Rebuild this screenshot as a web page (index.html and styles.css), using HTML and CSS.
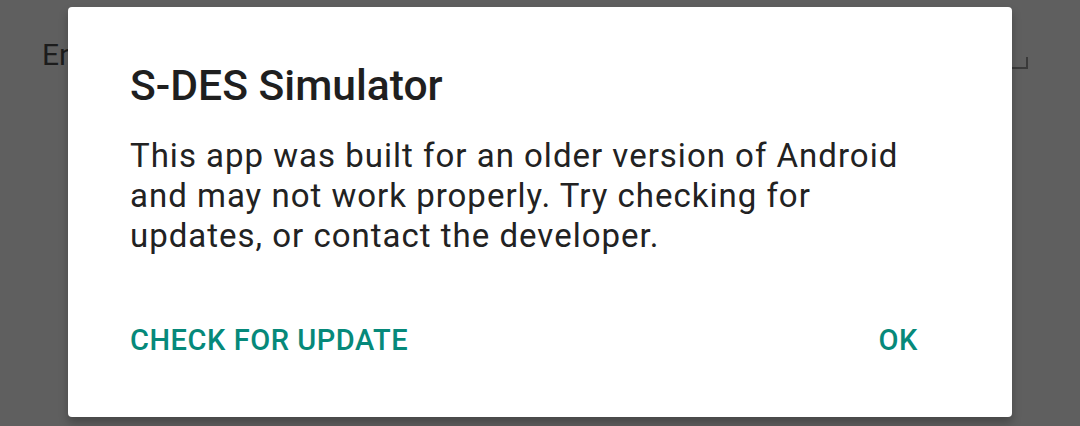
FILE: index.html
```html
<!DOCTYPE html>
<html>
<head>
<meta charset="utf-8">
<link rel="stylesheet" href="styles.css">
</head>
<body>
<div class="page">
  <div class="field">
    <span class="label">En</span>
    <span class="corner"></span>
  </div>
</div>
<div class="dialog">
  <h1 class="title">S-DES Simulator</h1>
  <p class="message">This app was built for an older version of Android and may not work properly. Try checking for updates, or contact the developer.</p>
  <div class="actions">
    <span class="btn">CHECK FOR UPDATE</span>
    <span class="btn">OK</span>
  </div>
</div>
</body>
</html>
```
FILE: styles.css
```css
html, body {
  margin: 0;
  padding: 0;
}
body {
  width: 1080px;
  height: 426px;
  background: #5f5f5f;
  font-family: Roboto, "Liberation Sans", sans-serif;
  position: relative;
  overflow: hidden;
}
.page {
  padding: 35px 52px 0 42px;
}
.field {
  display: flex;
  justify-content: space-between;
  align-items: flex-start;
}
.label {
  font-size: 30px;
  line-height: 40px;
  color: #1c1c1c;
}
.corner {
  width: 16px;
  height: 10px;
  margin-top: 22px;
  border-right: 2px solid #3a3a3a;
  border-bottom: 2px solid #3a3a3a;
}
.dialog {
  position: absolute;
  left: 68px;
  top: 7px;
  width: 944px;
  height: 410px;
  box-sizing: border-box;
  background: #ffffff;
  border-radius: 4px;
  padding: 53px 94px 0 62px;
  box-shadow: 0 6px 10px rgba(0,0,0,0.25);
}
.title {
  margin: 0;
  font-size: 42.6px;
  line-height: 50px;
  font-weight: 500;
  color: #1f1f1f;
}
.message {
  margin: 26px 0 0 0;
  font-size: 33px;
  line-height: 40px;
  font-weight: 400;
  color: #222222;
  letter-spacing: 1px;
}
.actions {
  margin-top: 64px;
  display: flex;
  justify-content: space-between;
}
.btn {
  font-size: 29px;
  line-height: 40px;
  font-weight: 500;
  color: #06897a;
  letter-spacing: 0.55px;
}
```
